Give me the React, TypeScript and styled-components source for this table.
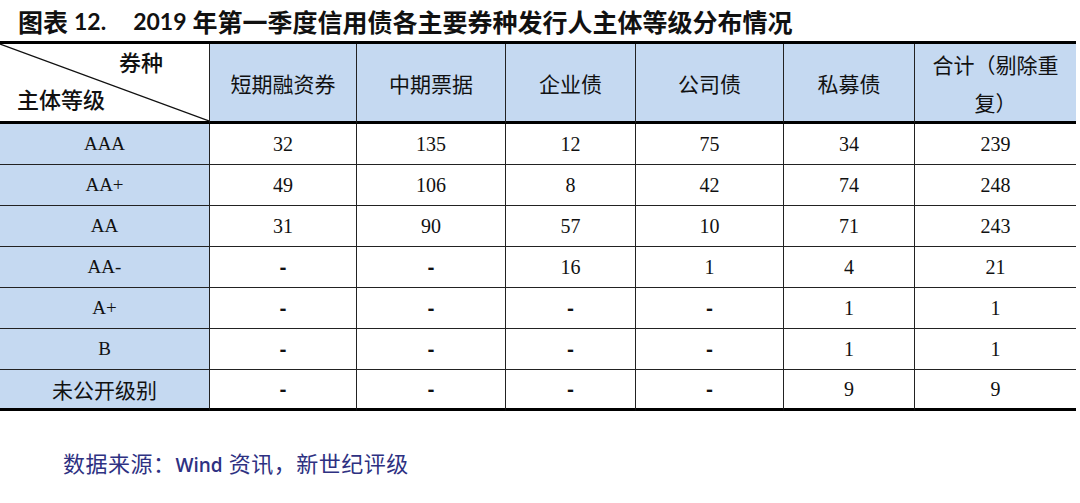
import React from 'react'
import styled, { createGlobalStyle } from 'styled-components'

const GlobalStyle = createGlobalStyle`
  html, body {
    margin: 0;
    padding: 0;
    background: #ffffff;
  }
`

const COLS = [210, 147, 149, 130, 148, 131, 161]
const CJK = '"Noto Sans CJK SC", sans-serif'

const Page = styled.div`
  width: 1080px;
  height: 503px;
  background: #fff;
  overflow: hidden;
`

const Title = styled.h1`
  margin: 0;
  height: 41px;
  padding-left: 18px;
  display: flex;
  align-items: center;
  font-family: "Lato", ${CJK};
  font-size: 25px;
  font-weight: 700;
  color: #111;
  white-space: pre;
`

const TitleNum = styled.span<{ $gap?: number }>`
  font-size: 23px;
  margin-left: ${(p) => p.$gap ?? 0}px;
  margin-right: 6px;
`

const Table = styled.table`
  width: 1076px;
  table-layout: fixed;
  border-collapse: separate;
  border-spacing: 0;
  border-top: 3px solid #000;
`

const HeadCell = styled.th<{ $last?: boolean }>`
  height: 77px;
  padding: 0 14px;
  background: #c5d9f1;
  border-bottom: 3px solid #000;
  border-right: ${(p) => (p.$last ? 'none' : '1px solid #222')};
  font-family: ${CJK};
  font-size: 21px;
  font-weight: 400;
  line-height: 38px;
  color: #111;
  text-align: center;
  vertical-align: middle;
`

const CornerCell = styled.th`
  position: relative;
  height: 77px;
  padding: 0;
  background: #fff;
  border-bottom: 3px solid #000;
  border-right: 1px solid #222;
  font-family: ${CJK};
  font-size: 22px;
  font-weight: 500;
  color: #111;
  vertical-align: top;
`

const Diagonal = styled.svg`
  position: absolute;
  inset: 0;
  width: 100%;
  height: 100%;
`

const CornerLabel = styled.span<{ $bottom?: boolean }>`
  position: absolute;
  ${(p) => (p.$bottom ? 'left: 17px; bottom: 8px;' : 'right: 46px; top: 2px;')}
  line-height: 30px;
`

const RowLabel = styled.td<{ $end?: boolean; $cjk?: boolean }>`
  height: ${(p) => (p.$end ? 38 : 40)}px;
  padding: 0;
  background: #c5d9f1;
  border-right: 1px solid #222;
  border-bottom: ${(p) => (p.$end ? '3px solid #000' : '1px solid #222')};
  font-family: ${(p) => (p.$cjk ? CJK : '"Liberation Serif", serif')};
  font-size: ${(p) => (p.$cjk ? 21 : 19)}px;
  color: #111;
  text-align: center;
  vertical-align: middle;
`

const DataCell = styled.td<{ $end?: boolean; $last?: boolean; $dash?: boolean }>`
  height: ${(p) => (p.$end ? 38 : 40)}px;
  padding: 0;
  background: #fff;
  border-right: ${(p) => (p.$last ? 'none' : '1px solid #222')};
  border-bottom: ${(p) => (p.$end ? '3px solid #000' : '1px solid #222')};
  font-family: ${(p) => (p.$dash ? '"Lato", sans-serif' : '"Liberation Serif", serif')};
  font-weight: ${(p) => (p.$dash ? 900 : 400)};
  font-size: 20px;
  color: #111;
  text-align: center;
  vertical-align: middle;
`

const Source = styled.p`
  margin: 35px 0 0 63px;
  font-family: ${CJK};
  font-size: 22px;
  letter-spacing: 0.5px;
  color: #2e3182;
`

const SourceName = styled.span`
  font-family: "Open Sans", sans-serif;
  font-size: 19px;
  font-weight: 600;
  letter-spacing: 0;
  margin-right: 6px;
`

const heads = ['短期融资券', '中期票据', '企业债', '公司债', '私募债', '合计（剔除重复）']

const rows: [string, string[]][] = [
  ['AAA', ['32', '135', '12', '75', '34', '239']],
  ['AA+', ['49', '106', '8', '42', '74', '248']],
  ['AA', ['31', '90', '57', '10', '71', '243']],
  ['AA-', ['-', '-', '16', '1', '4', '21']],
  ['A+', ['-', '-', '-', '-', '1', '1']],
  ['B', ['-', '-', '-', '-', '1', '1']],
  ['未公开级别', ['-', '-', '-', '-', '9', '9']],
]

const App: React.FC = () => {
  return (
    <Page>
      <GlobalStyle />
      <Title>
        图表<TitleNum $gap={6}>12.</TitleNum>
        <TitleNum $gap={21}>2019</TitleNum>
        年第一季度信用债各主要券种发行人主体等级分布情况
      </Title>
      <Table>
        <colgroup>
          {COLS.map((w, i) => (
            <col key={i} style={{ width: w }} />
          ))}
        </colgroup>
        <thead>
          <tr>
            <CornerCell>
              <Diagonal viewBox="0 0 210 77" preserveAspectRatio="none">
                <line x1="0" y1="0" x2="210" y2="77" stroke="#111" strokeWidth="1.2" />
              </Diagonal>
              <CornerLabel>券种</CornerLabel>
              <CornerLabel $bottom>主体等级</CornerLabel>
            </CornerCell>
            {heads.map((h, i) => (
              <HeadCell key={h} $last={i === heads.length - 1}>
                {h}
              </HeadCell>
            ))}
          </tr>
        </thead>
        <tbody>
          {rows.map(([label, vals], r) => {
            const end = r === rows.length - 1
            return (
              <tr key={label}>
                <RowLabel $end={end} $cjk={/[^\x00-\x7f]/.test(label)}>
                  {label}
                </RowLabel>
                {vals.map((v, i) => (
                  <DataCell key={i} $end={end} $last={i === vals.length - 1} $dash={v === '-'}>
                    {v}
                  </DataCell>
                ))}
              </tr>
            )
          })}
        </tbody>
      </Table>
      <Source>
        数据来源：<SourceName>Wind</SourceName>资讯，新世纪评级
      </Source>
    </Page>
  )
}

export default App
